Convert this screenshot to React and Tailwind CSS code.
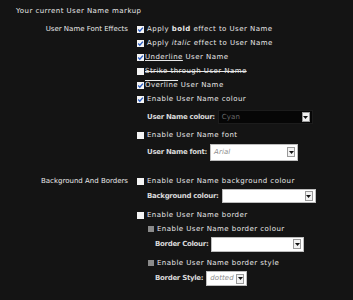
import React from "react";

const F = { fontFamily: '"DejaVu Sans", Verdana, sans-serif' };

function Check({ checked, grey }) {
  if (grey) return <span className="inline-block w-[6px] h-[6px] bg-[#8a8a8a] shrink-0" />;
  return (
    <span className="inline-flex items-center justify-center w-[7px] h-[7px] bg-[#f4f4f4] shrink-0">
      {checked && (
        <svg width="7" height="7" viewBox="0 0 7 7">
          <path d="M1.2 3.6 L2.8 5.2 L5.9 1.6" stroke="#2d5fc4" strokeWidth="1.4" fill="none" />
        </svg>
      )}
    </span>
  );
}

function Arrow() {
  return (
    <span className="ml-auto mr-[1px] w-[8px] h-[10px] bg-[#f2f2f2] border border-[#9a9a9a] flex items-center justify-center shrink-0">
      <svg width="5" height="3" viewBox="0 0 5 3"><path d="M0 0 H5 L2.5 3 Z" fill="#111" /></svg>
    </span>
  );
}

function Select({ w, h, text, dark, italic }) {
  return (
    <div
      className={`flex items-center pl-[3px] pr-[1px] gap-[2px] font-normal tracking-[0.1px] ${dark ? "bg-[#060606] border border-[#1c1c1c] text-[#6a6a6a]" : "bg-white border border-[#bdbdbd] text-[#8d8d8d]"}`}
      style={{ width: w, height: h }}
    >
      <span className={italic ? "italic" : ""}>{text}</span>
      <Arrow />
    </div>
  );
}

function Row({ h, mt = 0, children, label }) {
  return (
    <div className="flex" style={{ height: h, marginTop: mt }}>
      <div className="w-[128px] flex items-center justify-end">{label}</div>
      <div className="pl-[9px] flex items-center flex-1 tracking-[0.45px]">{children}</div>
    </div>
  );
}

function Sub({ pl, label, children }) {
  return (
    <div className="flex items-center gap-[3px]" style={{ paddingLeft: pl }}>
      <span className="font-bold tracking-[-0.3px] text-[#d8d8d8]">{label}</span>
      {children}
    </div>
  );
}

export default function App() {
  return (
    <div className="w-[353px] h-[300px] bg-[#141414] text-[#e8e8e8] text-[7px] leading-none whitespace-nowrap overflow-hidden" style={F}>
      <div className="h-[22px] flex items-center pl-[16px] tracking-[0.45px]">Your current User Name markup</div>
      <Row h={14} label="User Name Font Effects">
        <Check checked /><span className="ml-[3px]">Apply <b>bold</b> effect to User Name</span>
      </Row>
      <Row h={14}>
        <Check checked /><span className="ml-[3px]">Apply <i>italic</i> effect to User Name</span>
      </Row>
      <Row h={14}>
        <Check checked /><span className="ml-[1px]"><span className="underline">Underline</span> User Name</span>
      </Row>
      <Row h={14}>
        <Check /><span className="ml-[1px] line-through">Strike through User Name</span>
      </Row>
      <Row h={14}>
        <Check checked /><span className="ml-[1px]"><span className="overline">Overline</span> User Name</span>
      </Row>
      <Row h={14}>
        <Check checked /><span className="ml-[3px]">Enable User Name colour</span>
      </Row>
      <Row h={22}>
        <Sub pl={10} label="User Name colour:">
          <Select w={95} h={14} text="Cyan" dark />
        </Sub>
      </Row>
      <Row h={14}>
        <Check /><span className="ml-[3px]">Enable User Name font</span>
      </Row>
      <Row h={20}>
        <Sub pl={10} label="User Name font:">
          <Select w={88} h={17} text="Arial" italic />
        </Sub>
      </Row>
      <Row h={14} mt={12} label="Background And Borders">
        <Check /><span className="ml-[3px]">Enable User Name background colour</span>
      </Row>
      <Row h={16}>
        <Sub pl={10} label="Background colour:">
          <Select w={94} h={14} text="" />
        </Sub>
      </Row>
      <Row h={14} mt={4}>
        <Check /><span className="ml-[3px]">Enable User Name border</span>
      </Row>
      <Row h={14}>
        <div className="pl-[11px] flex items-center">
          <Check grey /><span className="ml-[3px]">Enable User Name border colour</span>
        </div>
      </Row>
      <Row h={16}>
        <Sub pl={18} label="Border Colour:">
          <Select w={93} h={15} text="" />
        </Sub>
      </Row>
      <Row h={14} mt={4}>
        <div className="pl-[11px] flex items-center">
          <Check grey /><span className="ml-[3px]">Enable User Name border style</span>
        </div>
      </Row>
      <Row h={17}>
        <Sub pl={18} label="Border Style:">
          <Select w={41} h={15} text="dotted" italic />
        </Sub>
      </Row>
    </div>
  );
}
